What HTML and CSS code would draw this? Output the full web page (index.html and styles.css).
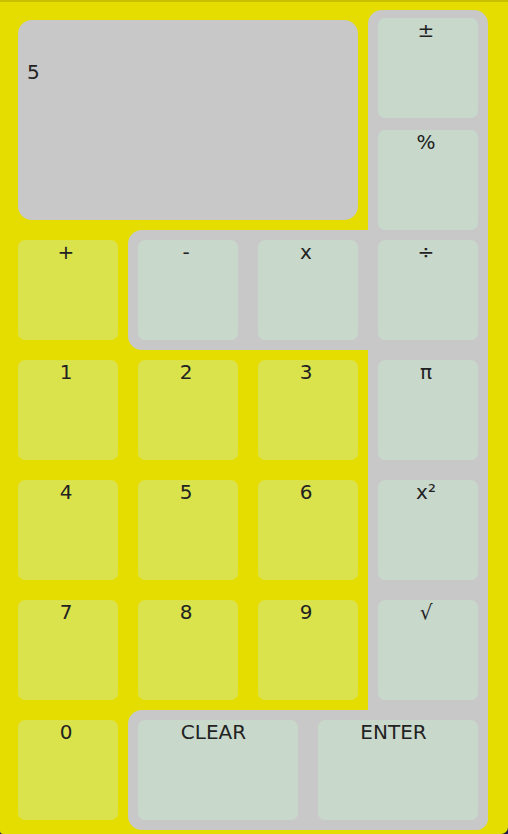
FILE: index.html
```html
<!DOCTYPE html>
<html>
<head>
<meta charset="utf-8">
<link rel="stylesheet" href="styles.css">
</head>
<body>
<div class="calc">
  <div class="panel panel-right"></div>
  <div class="panel panel-ops"></div>
  <div class="panel panel-bottom"></div>

  <div class="display">5</div>
  <div class="top-keys">
    <div class="key grey">±</div>
    <div class="key grey">%</div>
  </div>

  <div class="key yellow r2 c1">+</div>
  <div class="key grey r2 c2">-</div>
  <div class="key grey r2 c3">x</div>
  <div class="key grey r2 c4">÷</div>

  <div class="key yellow r3 c1">1</div>
  <div class="key yellow r3 c2">2</div>
  <div class="key yellow r3 c3">3</div>
  <div class="key grey r3 c4">π</div>

  <div class="key yellow r4 c1">4</div>
  <div class="key yellow r4 c2">5</div>
  <div class="key yellow r4 c3">6</div>
  <div class="key grey r4 c4">x²</div>

  <div class="key yellow r5 c1">7</div>
  <div class="key yellow r5 c2">8</div>
  <div class="key yellow r5 c3">9</div>
  <div class="key grey r5 c4">√</div>

  <div class="key yellow r6 c1">0</div>
  <div class="bottom-keys">
    <div class="key grey wide">CLEAR</div>
    <div class="key grey wide">ENTER</div>
  </div>
</div>
</body>
</html>
```

FILE: styles.css
```css
html, body {
  margin: 0;
  padding: 0;
  background: #1c1a48;
}
body {
  width: 508px;
  height: 834px;
  overflow: hidden;
}
.calc {
  box-sizing: border-box;
  width: 508px;
  height: 834px;
  background: #e5dd00;
  border-top: 2px solid #c9c100;
  border-radius: 0 0 7px 3px;
  padding: 8px 20px 4px 8px;
  display: grid;
  grid-template-columns: repeat(4, 120px);
  grid-template-rows: 220px repeat(5, 120px);
  font-family: "DejaVu Sans", sans-serif;
  font-size: 20px;
  color: #222222;
}
.panel {
  background: #c8c8c8;
}
.panel-right {
  grid-column: 4;
  grid-row: 1 / 7;
  border-radius: 14px 14px 12px 0;
}
.panel-ops {
  grid-column: 2 / 5;
  grid-row: 2;
  border-radius: 14px 0 0 14px;
}
.panel-bottom {
  grid-column: 2 / 5;
  grid-row: 6;
  border-radius: 14px 0 12px 14px;
}
.display {
  grid-column: 1 / 4;
  grid-row: 1;
  margin: 10px;
  background: #c8c8c8;
  border-radius: 14px;
  padding: 41px 9px 0;
  line-height: 23px;
}
.top-keys {
  grid-column: 4;
  grid-row: 1;
  display: flex;
  flex-direction: column;
  gap: 12px;
  padding: 8px 10px 0;
}
.top-keys .key {
  height: 100px;
  margin: 0;
  box-sizing: border-box;
}
.key {
  margin: 10px;
  border-radius: 7px;
  text-align: center;
  line-height: 23px;
  padding: 1px 4px 0 0;
}
.yellow { background: #dbe34c; }
.grey { background: #c8d8cb; }
.r2 { grid-row: 2; }
.r3 { grid-row: 3; }
.r4 { grid-row: 4; }
.r5 { grid-row: 5; }
.r6 { grid-row: 6; }
.c1 { grid-column: 1; }
.c2 { grid-column: 2; }
.c3 { grid-column: 3; }
.c4 { grid-column: 4; }
.bottom-keys {
  grid-column: 2 / 5;
  grid-row: 6;
  display: flex;
  gap: 20px;
  padding: 10px;
}
.bottom-keys .key {
  flex: 1;
  margin: 0;
  padding-right: 9px;
}
```
